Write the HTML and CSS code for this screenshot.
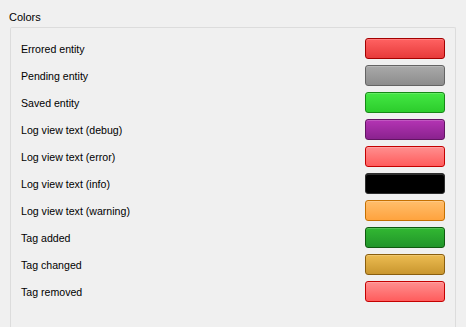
FILE: index.html
```html
<!DOCTYPE html>
<html>
<head>
<meta charset="utf-8">
<link rel="stylesheet" href="styles.css">
</head>
<body>
<div class="page">
  <div class="title">Colors</div>
  <div class="group">
    <div class="row"><span class="label">Errored entity</span><span class="swatch errored"></span></div>
    <div class="row"><span class="label">Pending entity</span><span class="swatch pending"></span></div>
    <div class="row"><span class="label">Saved entity</span><span class="swatch saved"></span></div>
    <div class="row"><span class="label">Log view text (debug)</span><span class="swatch debug"></span></div>
    <div class="row"><span class="label">Log view text (error)</span><span class="swatch error"></span></div>
    <div class="row"><span class="label">Log view text (info)</span><span class="swatch info"></span></div>
    <div class="row"><span class="label">Log view text (warning)</span><span class="swatch warning"></span></div>
    <div class="row"><span class="label">Tag added</span><span class="swatch added"></span></div>
    <div class="row"><span class="label">Tag changed</span><span class="swatch changed"></span></div>
    <div class="row"><span class="label">Tag removed</span><span class="swatch removed"></span></div>
  </div>
</div>
</body>
</html>
```
FILE: styles.css
```css
html, body {
  margin: 0;
  padding: 0;
  background: #f0f0f0;
  width: 466px;
  height: 327px;
  overflow: hidden;
}
.page {
  font-family: "Liberation Sans", Arial, sans-serif;
  font-size: 10.6px;
  color: #000;
  padding: 9px 10px 0 10px;
  height: 327px;
  box-sizing: border-box;
  display: flex;
  flex-direction: column;
}
.title {
  margin-left: -1px;
  height: 18px;
  line-height: 17px;
  font-size: 11px;
}
.group {
  flex: 1;
  border: 1px solid #dcdcdc;
  border-bottom: none;
  border-radius: 2px 2px 0 0;
  padding: 10px 10px 0 9px;
  display: flex;
  flex-direction: column;
  gap: 6px;
}
.row {
  display: flex;
  align-items: center;
  justify-content: space-between;
  height: 21px;
}
.label {
  line-height: 21px;
  padding-left: 1px;
  padding-top: 2px;
}
.swatch {
  width: 78px;
  height: 19px;
  border: 1px solid;
  border-radius: 3px;
  box-shadow: inset 0 1px 0 rgba(255,255,255,0.18);
}
.errored { background: linear-gradient(#ff6262, #e73a3a); border-color: #a30000; }
.pending { background: linear-gradient(#a9a9a9, #8d8d8d); border-color: #646464; }
.saved { background: linear-gradient(#44e844, #2ccc2c); border-color: #168816; }
.debug { background: linear-gradient(#b434b4, #8a228e); border-color: #621462; }
.error { background: linear-gradient(#ff8f8f, #ff5c5c); border-color: #c40000; }
.info { background: #000; border-color: #2e2e2e; }
.warning { background: linear-gradient(#ffbe6c, #ffa33e); border-color: #c57000; }
.added { background: linear-gradient(#32b832, #21952a); border-color: #0f5a0f; }
.changed { background: linear-gradient(#ecbc52, #c9962e); border-color: #8a5e0e; }
.removed { background: linear-gradient(#ff8f8f, #ff5c5c); border-color: #c40000; }
```
